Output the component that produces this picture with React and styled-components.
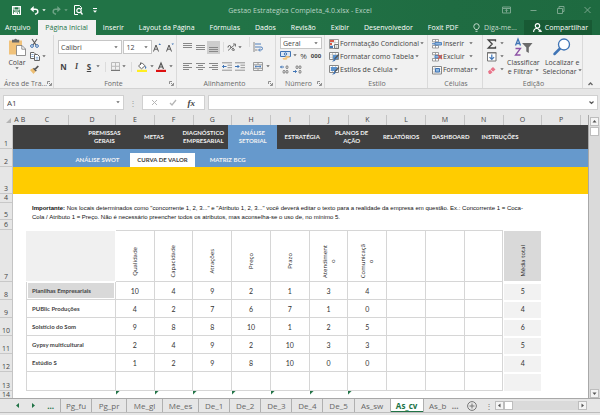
import React from "react";
import styled, { createGlobalStyle, css } from "styled-components";

const GREEN = "#217346";
const UI = '"Open Sans", "Noto Sans", sans-serif';
const CELL = 'Lato, "Open Sans", sans-serif';
const TEXT = '"Liberation Sans", Arial, sans-serif';

const ROWS = [24, 18, 27, 9, 17, 10, 52, 18, 18, 18, 18, 18, 19, 7];
const COLS = "28fr 24fr 172fr 188fr repeat(12, 155fr) 28fr";

const GlobalStyle = createGlobalStyle`
  * { box-sizing: border-box; }
  body { margin: 0; background: #e6e6e6; font-family: ${UI}; font-size: 7px; color: #444; }
  button, select, input { font: inherit; color: inherit; margin: 0; padding: 0; border: 0; background: none; }
`;

const Page = styled.div`
  display: flex;
  flex-direction: column;
  min-height: 100vh;
`;

/* ---------- title bar and ribbon tabs ---------- */
const Header = styled.header`
  background: linear-gradient(90deg, #217346 40%, #1f6c42 75%, #1e6a40);
  color: #fff;
`;
const TitleBar = styled.div`
  display: grid;
  grid-template-columns: 1fr auto 1fr;
  align-items: center;
  height: 20px;
`;
const QuickBar = styled.div`
  display: flex;
  align-items: center;
  padding-left: 12px;
`;
const IconButton = styled.button`
  display: flex;
  align-items: center;
  gap: ${(p) => p.$gap || 0}px;
  margin-right: ${(p) => p.$after || 0}px;
  opacity: ${(p) => (p.$dim ? 0.35 : 1)};
  line-height: 9px;
  white-space: nowrap;
`;
const Title = styled.h1`
  margin: 0;
  font-size: 7px;
  font-weight: 400;
  color: #b9d3c4;
`;
const WindowButtons = styled.div`
  display: flex;
  justify-content: flex-end;
  gap: 18px;
  padding-right: 8px;
  opacity: 0.4;
`;
const RibbonTabs = styled.nav`
  display: flex;
  height: 15px;
  padding-right: 8px;
`;
const RibbonTab = styled.button`
  padding: 0 8px 0 7px;
  color: ${(p) => (p.$active ? GREEN : "#fff")};
  background: ${(p) => (p.$active ? "#f1f1f1" : "none")};
  white-space: nowrap;
  &:first-child { padding-left: 5px; }
`;
const TellMe = styled.button`
  display: flex;
  align-items: center;
  gap: 4px;
  margin-left: auto;
  margin-right: 7px;
  color: #c4dacd;
  white-space: nowrap;
`;
const Share = styled.button`
  display: flex;
  align-items: center;
  gap: 3px;
  padding: 0 4px 0 9px;
  background: #185a34;
`;

/* ---------- ribbon ---------- */
const Ribbon = styled.section`
  display: grid;
  grid-template-columns: 54fr 123fr 99fr 49fr 103fr 55fr 100fr 17fr;
  height: 54px;
  background: #f1f1f1;
  border-bottom: 1px solid #d2d2d2;
`;
const Group = styled.div`
  display: flex;
  flex-direction: column;
  justify-content: space-between;
  padding: 2px 2px 0 4px;
  border-right: 1px solid #dadada;
  min-width: 0;
  &:last-child { border: 0; }
`;
const GroupBody = styled.div`
  display: flex;
  flex: 1;
  gap: ${(p) => p.$gap || 0}px;
  padding-left: ${(p) => p.$inset || 0}px;
`;
const GroupLabel = styled.div`
  display: flex;
  align-items: center;
  height: 10px;
  color: #6a6a6a;
  span { flex: 1; text-align: center; white-space: nowrap; }
`;
const Stack = styled.div`
  display: flex;
  flex-direction: column;
  justify-content: space-around;
  flex: ${(p) => (p.$grow ? 1 : "none")};
  padding-bottom: 2px;
`;
const Line = styled.div`
  display: flex;
  align-items: center;
  gap: ${(p) => p.$gap || 0}px;
  height: ${(p) => p.$h || 13}px;
`;
const BigButton = styled.button`
  display: flex;
  flex-direction: column;
  align-items: center;
  padding-top: 1px;
  line-height: 9px;
  white-space: nowrap;
  svg:first-child { margin-bottom: 2px; }
`;
const Glyph = styled.button`
  width: ${(p) => p.$w || 10}px;
  font-family: ${(p) => (p.$serif ? '"Liberation Serif", serif' : "inherit")};
  font-size: ${(p) => p.$size || 8}px;
  line-height: 10px;
  font-weight: ${(p) => (p.$bold ? 700 : 400)};
  font-style: ${(p) => (p.$italic ? "italic" : "normal")};
  text-decoration: ${(p) => (p.$underline ? "underline" : "none")};
  text-align: center;
`;
const Toggle = styled.button`
  display: flex;
  align-items: center;
  justify-content: center;
  width: 13px;
  height: 13px;
  background: ${(p) => (p.$on ? "#cdcdcd" : "none")};
`;
const Bar = styled.span`
  width: 1px;
  height: 10px;
  margin: 0 3px;
  background: #dcdcdc;
`;
const SelectBox = styled.label`
  display: flex;
  align-items: center;
  flex: ${(p) => p.$grow || 1};
  min-width: 0;
  height: ${(p) => p.$h || 14}px;
  padding: 0 3px 0 2px;
  background: #fff;
  border: 1px solid #c6c6c6;
  select { flex: 1; min-width: 0; appearance: none; outline: 0; }
`;

/* ---------- formula bar ---------- */
const FormulaRow = styled.div`
  display: flex;
  align-items: center;
  gap: 3px;
  padding: 6px 2px 5px 3px;
`;
const FormulaBox = styled.div`
  display: flex;
  align-items: center;
  flex: ${(p) => p.$flex};
  justify-content: ${(p) => p.$justify || "space-between"};
  height: 15px;
  padding: 0 3px;
  background: #fff;
  border: 1px solid #d0d0d0;
  font-size: 8px;
  input { flex: 1; min-width: 0; outline: 0; }
`;
const Dots = styled.span`
  width: 12px;
  text-align: center;
  color: #999;
  font-size: 8px;
  line-height: 10px;
`;

/* ---------- sheet ---------- */
const Workbook = styled.main`
  display: grid;
  grid-template-columns: 13px 1fr 12px;
  grid-template-rows: 10px auto;
`;
const Corner = styled.div`
  display: flex;
  justify-content: flex-end;
  align-items: flex-end;
  padding: 0 2px 2px 0;
`;
const ColumnHeads = styled.div`
  display: grid;
  grid-template-columns: ${COLS};
  font-size: 7px;
  line-height: 10px;
  text-align: center;
  span { border-right: 1px solid #c4c4c4; }
  span:nth-child(-n + 2) { border: 0; }
  span:last-child { border: 0; }
`;
const RowHeads = styled.div`
  display: grid;
  grid-template-rows: ${ROWS.map((h) => h + "px").join(" ")};
  font-size: 7px;
  border-right: 1px solid #c4c4c4;
`;
const RowHead = styled.span`
  display: flex;
  align-items: flex-end;
  justify-content: center;
  min-height: 0;
  padding-bottom: 2px;
  line-height: 7px;
  box-shadow: inset 0 -1px #c8c8c8;
  &:last-child { padding: 0; box-shadow: none; }
`;
const Sheet = styled.div`
  background: #fff;
  font-family: ${CELL};
`;
const MainNav = styled.nav`
  display: grid;
  grid-template-columns: repeat(9, 1fr);
  height: ${ROWS[0]}px;
  padding: 0 11% 0 11.6%;
  background: #404040;
`;
const NavLink = styled.a`
  display: flex;
  align-items: center;
  justify-content: center;
  text-align: center;
  color: #f2f2f2;
  background: ${(p) => (p.$active ? "#6699cc" : "none")};
  font-weight: 700;
  font-size: 6px;
  line-height: 8px;
  text-decoration: none;
`;
const SubNav = styled.nav`
  display: grid;
  grid-template-columns: repeat(3, 1fr);
  height: ${ROWS[1]}px;
  padding: 4px 57% 0 9%;
  background: #6699cc;
`;
const SubLink = styled(NavLink)`
  color: ${(p) => (p.$active ? "#404040" : "#f2f2f2")};
  background: ${(p) => (p.$active ? "#fff" : "none")};
`;
const Banner = styled.div`
  height: ${ROWS[2]}px;
  background: #ffcc00;
`;
const Note = styled.p`
  margin: 0;
  height: ${ROWS[3] + ROWS[4] + ROWS[5]}px;
  padding: 10px 56px 0 19px;
  font-family: ${TEXT};
  font-size: 6px;
  line-height: 9px;
  color: #111;
`;
const TableArea = styled.div`
  display: grid;
  grid-template-columns: ${COLS};
`;
const DataTable = styled.table`
  grid-column: 3 / 16;
  width: 100%;
  table-layout: fixed;
  border-spacing: 0;
  font-size: 7px;
  line-height: 8px;
  color: #333;
  col:first-child { width: 17.4%; }
`;
const line = css`1px solid #d6d6d6`;
const Cell = styled.td`
  height: ${(p) => p.$h}px;
  padding: 0;
  text-align: center;
  border-right: ${line};
  border-bottom: ${line};
`;
const NameCell = styled.th`
  height: ${(p) => p.$h}px;
  padding: 0 0 0 5px;
  text-align: left;
  font-size: 6px;
  font-weight: 700;
  color: #444;
  border: ${line};
  border-top: 0;
  background: ${(p) => (p.$own ? "#d9d9d9" : "none")};
  box-shadow: ${(p) => (p.$own ? "inset 0 0 0 1px #fff" : "none")};
`;
const TotalCell = styled.td`
  padding: 0;
  text-align: center;
  background: #f2f2f2;
  box-shadow: inset 0 1px 0 1px #fff;
`;
const HeadCell = styled.th`
  height: ${ROWS[6]}px;
  padding: 10px 0 0;
  border-top: ${line};
  border-right: ${line};
  border-bottom: ${line};
  font-size: 6px;
  font-weight: 400;
  color: #222;
  ${(p) => p.$kind === "blank" && css`background: #f0f0f0; border-color: #fff;`}
  ${(p) => p.$kind === "total" && css`background: #d9d9d9; border-color: #fff; border-left: 1px solid #fff;`}
`;
const Upright = styled.span`
  display: inline-block;
  writing-mode: vertical-rl;
  transform: rotate(180deg);
  font-family: ${UI};
  text-align: center;
  vertical-align: middle;
`;
const NoteCell = styled.td`
  height: ${ROWS[13]}px;
  padding: 0;
  background: ${(p) => (p.$mark ? `linear-gradient(135deg, ${GREEN} 2px, transparent 3px)` : "none")};
`;
const VScroll = styled.div`
  grid-column: 3;
  grid-row: 1 / 3;
  display: flex;
  flex-direction: column;
  align-items: center;
  gap: 1px;
  padding-top: 2px;
  background: linear-gradient(#e6e6e6, #e6e6e6) 0 0 / 100% 10px no-repeat, #dadada;
  border-left: 1px solid #a8a8a8;
`;
const ScrollPart = styled.button`
  display: flex;
  align-items: center;
  justify-content: center;
  width: 9px;
  height: 9px;
  background: ${(p) => (p.$plain ? "#fff" : "#f4f4f4")};
  border: 1px solid #bdbdbd;
  margin-top: ${(p) => (p.$end ? "auto" : 0)};
  margin-left: ${(p) => (p.$right ? "auto" : 0)};
`;

/* ---------- sheet tabs ---------- */
const SheetBar = styled.footer`
  display: flex;
  align-items: center;
  height: 15px;
  border-top: 1px solid #a8a8a8;
  border-bottom: 1px solid #bcbcbc;
  font-size: 8px;
`;
const Steps = styled.div`
  display: flex;
  align-items: center;
  justify-content: space-between;
  width: 60px;
  padding: 0 6px 0 15px;
  color: ${GREEN};
`;
const SheetTab = styled.button`
  height: 13px;
  flex: ${(p) => p.$w} 0 0;
  white-space: nowrap;
  color: ${(p) => (p.$active ? GREEN : "#666")};
  font-weight: ${(p) => (p.$active ? 700 : 400)};
  background: ${(p) => (p.$active ? "#fff" : "none")};
  border-left: 1px solid #b0b0b0;
  box-shadow: ${(p) => (p.$active ? `inset 0 -1px ${GREEN}` : "none")};
`;
const SheetTabs = styled.div`
  display: flex;
  flex: 391 0 0;
`;
const TabTail = styled.div`
  display: flex;
  align-items: center;
  gap: 8px;
  flex: 43 0 0;
  color: #777;
`;
const HScroll = styled.div`
  display: flex;
  flex: 92 0 0;
  height: 9px;
  margin-right: 13px;
  background: #dadada;
`;

/* ---------- icons ---------- */
const Svg = styled.svg`
  display: block;
  flex: none;
  overflow: visible;
`;
const I = ({ w = 10, h = 10, box, children, ...rest }) => (
  <Svg width={w} height={h} viewBox={box || `0 0 ${w} ${h}`} fill="none" stroke="#666" strokeWidth="1" aria-hidden="true" {...rest}>
    {children}
  </Svg>
);
const Caret = ({ c = "#666" }) => (
  <I w={4} h={3}><path d="M.3.300h3.400L2 2.200z" fill={c} stroke="none" /></I>
);
const Launcher = () => (
  <I w={5} h={5}><path d="M.5 3V.5H3M2 2l2 2M4.500 2v2.500H2" stroke="#777" strokeWidth=".8" /></I>
);
const Lines = ({ rows }) => (
  <I w={9} h={9}>{rows.map(([x, y, w], i) => <path key={i} d={`M${x} ${y}h${w}`} stroke="#888" />)}</I>
);
const Save = () => (
  <I w={9} h={9} stroke="#fff"><path d="M.6.6h7.800v7.800H.6z" strokeWidth="1.200" /><path d="M2 1v3h5V1" /><path d="M2.500 8.500V6h4v2.500" /><path d="M3 6.500h2v1.500H3z" fill="#fff" stroke="none" /></I>
);
const Undo = ({ flip }) => (
  <I w={9} h={9} stroke="#fff">
    <g transform={flip ? "translate(9 0) scale(-1 1)" : undefined}>
      <path d="M1.500 3.200h4a2.300 2.300 0 0 1 1 4.400l-1.500.6" strokeWidth="1.500" /><path d="M3.700 0L.2 3.200l3.500 3z" fill="#fff" stroke="none" />
    </g>
  </I>
);
const Preview = () => (
  <I w={9} h={10} stroke="#fff"><path d="M7.500 4V2.500l-2-2h-5v9H4" /><circle cx="5" cy="5.500" r="2.200" strokeWidth="1.200" /><path d="M6.500 7l2 2.500" strokeWidth="1.300" /></I>
);
const Paste = () => (
  <I w={18} h={18}>
    <path d="M1 2.500h13v14H1z" fill="#f0c27b" stroke="none" /><path d="M4 1.800h2.200a1.500 1.500 0 0 1 2.800 0h2.200V4.500H4z" fill="#696969" stroke="none" />
    <path d="M8.500 7.500h5.500l3.500 3.500v6.500h-9z" fill="#fff" stroke="#777" strokeWidth=".8" /><path d="M13.800 7.500v3.700h3.700" stroke="#777" strokeWidth=".8" />
  </I>
);
const Cut = () => (
  <I w={9} h={9}><path d="M2 0l4 6M7 0L3 6" stroke="#555" strokeWidth="1.100" /><circle cx="2" cy="7" r="1.400" stroke="#3f74b5" /><circle cx="7" cy="7" r="1.400" stroke="#3f74b5" /></I>
);
const Copy = () => (
  <I w={10} h={9}><path d="M.5.5h3.500l1.500 1.500v4.500h-5z" fill="#fff" /><path d="M4.500 2.500H7.500l2 2v4h-5z" fill="#fff" /><path d="M1.500 2.500h2M1.500 4.500h2M5.800 5.300h2.500M5.800 7h2.500" stroke="#4e83bd" strokeWidth=".7" /></I>
);
const Brush = () => (
  <I w={9} h={9}><path d="M0 5l3-2 3 3-2.500 3z" fill="#ecbd72" stroke="none" /><path d="M3.500 3.200l2.800 2.800" stroke="#555" strokeWidth="1.400" /><path d="M5.200 4.200L8.300 1" stroke="#555" strokeWidth="1.700" /></I>
);
const Borders = () => (
  <I w={9} h={9}><path d="M.5.5h8v7.500h-8zM4.500.5v8M.5 4.300h8" stroke="#bbb" /><path d="M0 8.500h9" stroke="#777" /></I>
);
const Fill = () => (
  <I w={10} h={10}><path d="M1.500 4L5 .8l3 3-3.500 3z" fill="#fff" stroke="#666" /><path d="M3.500 3V.5" /><path d="M8.500 3.500q1.500 2 .5 3t-1-1z" fill="#3f74b5" stroke="none" /><path d="M0 7.800h10V10H0z" fill="#ffee22" stroke="none" /></I>
);
const FontColor = () => (
  <I w={10} h={10}><path d="M2.500 7L5 1l2.500 6M3.400 5h3.200" stroke="#555" strokeWidth="1.200" /><path d="M0 7.800h10V10H0z" fill="#d11" stroke="none" /></I>
);
const Grow = ({ down }) => (
  <I w={8} h={9}><path d="M.5 8.500L3 2l2.500 6.500M1.400 6.200h3.200" stroke="#555" /><path d={down ? "M5.500.5h2.500L6.700 2z" : "M5.500 2h2.500L6.700.3z"} fill="#3f74b5" stroke="none" /></I>
);
const Orient = () => (
  <I w={10} h={9}><path d="M1 7.500L8 1.500M8.500 1v2.500M8.500 1H6" stroke="#777" /><path d="M1 4.500q0-2 1.500-2T4 5M5.500 7.500q-1-1.500 0-2t1.500.5-.5 2" stroke="#555" /></I>
);
const Wrap = () => (
  <I w={10} h={10}><path d="M1 0v10" stroke="#888" /><path d="M2 2h6M2 5h6q1.500 0 1.500 1.500T8 8H6M7 6.500L5.500 8 7 9.500" stroke="#3f74b5" strokeWidth=".9" /><path d="M2 8h2.500" stroke="#888" /></I>
);
const Merge = () => (
  <I w={10} h={9}><path d="M.5.5h9v8h-9zM.5 2.800h9M.5 6.300h9M5 .5v2M5 6.500v2" stroke="#888" strokeWidth=".8" /><path d="M2 4.500h6M3.300 3.500L2 4.500l1.300 1M6.700 3.500L8 4.500l-1.300 1" stroke="#3f74b5" strokeWidth=".8" /></I>
);
const Indent = ({ right }) => (
  <I w={10} h={9}><path d="M0 .8h10M5.500 3.200H10M5.500 5.700H10M0 8.200h10" stroke="#888" strokeWidth=".9" /><path d={right ? "M0 4.500h4M2.500 3L4 4.500 2.500 6" : "M4.500 4.500H.5M2 3L.5 4.500 2 6"} stroke="#3f74b5" /></I>
);
const Money = () => (
  <I w={11} h={9}><path d="M.5.5h10v5H.5z" fill="#dbe8f5" stroke="#3f74b5" /><circle cx="5.500" cy="3" r="1.200" stroke="#3f74b5" /><ellipse cx="7.500" cy="6" rx="2.500" ry="1" fill="#f2c478" stroke="none" /><ellipse cx="5" cy="7.800" rx="2.500" ry="1" fill="#f2c478" stroke="none" /></I>
);
const Decimal = ({ less }) => (
  <I w={9} h={9}>
    <path d={less ? "M0 6.500h3.500M2.200 5.200L3.500 6.500 2.200 7.800" : "M4 2H.5M1.800.7L.5 2l1.300 1.300"} stroke="#3f74b5" />
    <g stroke="#666" strokeWidth=".8"><ellipse cx="7" cy="2.200" rx="1" ry="1.500" /><ellipse cx="7" cy="6.800" rx="1" ry="1.500" />{less ? <ellipse cx="4" cy="2.200" rx="1" ry="1.500" /> : <ellipse cx="4" cy="6.800" rx="1" ry="1.500" />}</g>
  </I>
);
const CondFmt = () => (
  <I w={10} h={10}><path d="M.5.5h9v9h-9z" fill="#fff" stroke="#999" /><path d="M1 3.500h8M1 6.500h8M6 1v8" stroke="#bbb" strokeWidth=".6" /><path d="M1 1h4v2H1zM1 4h2v2H1z" fill="#d65a4a" stroke="none" /><path d="M1 7h3v2H1z" fill="#3f74b5" stroke="none" /><path d="M5.500 5.500h4v4h-4z" fill="#fff" stroke="#777" /><path d="M6.500 7h2M6.500 8.300h2" stroke="#777" strokeWidth=".6" /></I>
);
const TableFmt = ({ solid }) => (
  <I w={10} h={10}><path d="M.5.5h9v7h-9z" fill="#fff" stroke="#888" /><path d="M1 2.800h8M1 5.200h8M3.500 1v6M6.500 1v6" stroke="#aaa" strokeWidth=".6" /><path d={solid ? "M2 2h6v4H2z" : "M4 3h5v4H4z"} fill="#5b93cf" stroke="none" /><path d="M9.800 2.500L5.500 7" stroke="#555" strokeWidth="1.200" /><path d="M5.800 6l1 1.500Q6 10 3 9.500q2-1 2.800-3.500z" fill="#3f74b5" stroke="none" /></I>
);
const InsertCells = ({ del }) => (
  <I w={10} h={10}><path d="M.5.5h6v2.300h-6zM.5 6.500h6v2.500h-6zM3.500.5v2.300M3.500 6.500v2.500" fill="#fff" stroke="#888" strokeWidth=".8" /><path d="M3 3.500h6.500V6H3z" fill="#8fb8e0" stroke="#3f74b5" strokeWidth=".8" />{del ? <path d="M6 3l4 4M10 3L6 7" stroke="#d65a4a" strokeWidth="1.200" /> : <path d="M0 4.800h3" stroke="#3f74b5" />}</I>
);
const FormatCells = () => (
  <I w={10} h={10}><path d="M.5 1.500h9v7.500h-9z" fill="#fff" stroke="#888" /><path d="M3 .5v9M1 4h8M1 7h8" stroke="#aaa" strokeWidth=".6" /><path d="M3.500 3.500h4v3.500h-4z" fill="#8fb8e0" stroke="#3f74b5" /></I>
);
const Sigma = () => <I w={10} h={10}><path d="M8.500 2.500V1H1.200l4 4-4 4h7.300V7.500" stroke="#444" strokeWidth="1.300" /></I>;
const FillDown = () => <I w={10} h={10}><path d="M.5.5h8.500v8.500H.5z" fill="#fff" stroke="#777" /><path d="M0 1h9.500" stroke="#777" /><path d="M4.800 2.500v5M2.500 5.200l2.300 2.300 2.300-2.300" stroke="#3f74b5" strokeWidth="1.200" /></I>;
const Eraser = () => <I w={10} h={10}><path d="M1 6.500l5-4.500 2.500 2.500-5 4.500H2z" fill="#e8758a" stroke="none" /><path d="M3.200 4.500l2.800 2.600" stroke="#fff" strokeWidth=".8" /></I>;
const SortFilter = () => (
  <I w={19} h={18}>
    <path d="M1.500 7.500L4 1l2.500 6.500M2.400 5.500h3.200" stroke="#3f74b5" strokeWidth="1.300" /><path d="M1.500 10.500h5l-5 6.500h5" stroke="#8d52a5" strokeWidth="1.300" />
    <path d="M8 5h10.500L14.800 9.500v5.500l-2.500-1.500v-4z" fill="#6b6b6b" stroke="none" />
  </I>
);
const Find = () => (
  <I w={18} h={18}><path d="M7 10.500L1.500 16" stroke="#3f74b5" strokeWidth="2.500" strokeLinecap="round" /><circle cx="11" cy="6.500" r="5.500" fill="#fff" stroke="#3f74b5" strokeWidth="1.300" /></I>
);
const Bulb = () => <I w={7} h={9} stroke="#c4dacd"><path d="M2.500 6.500Q.8 4.800.8 3.400a2.700 2.700 0 0 1 5.400 0Q6.200 4.800 4.500 6.500zM2.500 8.300h2" /></I>;
const Person = () => <I w={9} h={9} stroke="#fff"><circle cx="4.500" cy="2.800" r="2.200" strokeWidth="1.200" /><path d="M.6 9q0-3.500 3.500-3.800L7.500 8M5.500 8.200h3.500M7.300 6.500V9" strokeWidth="1.100" /></I>;
const WinIcon = ({ d }) => <I w={9} h={8} stroke="#fff"><path d={d} /></I>;
const Tri = ({ d, c = "#555" }) => <I w={5} h={5}><path d={d} fill={c} stroke="none" /></I>;

/* ---------- data ---------- */
const tabs = ["Arquivo", "Página Inicial", "Inserir", "Layout da Página", "Fórmulas", "Dados", "Revisão", "Exibir", "Desenvolvedor", "Foxit PDF"];
const nav = ["PREMISSAS GERAIS", "METAS", "DIAGNÓSTICO EMPRESARIAL", "ANÁLISE SETORIAL", "ESTRATÉGIA", "PLANOS DE AÇÃO", "RELATÓRIOS", "DASHBOARD", "INSTRUÇÕES"];
const heads = [["Qualidade"], ["Capacidade"], ["Atrações"], ["Preço"], ["Prazo"], ["Atendiment", "o"], ["Comunicaçã", "o"], [], [], []];
const rows = [
  ["Planilhas Empresariais", [10, 4, 9, 2, 1, 3, 4], 5],
  ["PUBlic Produções", [4, 2, 7, 6, 7, 1, 0], 4],
  ["Solstício do Som", [9, 8, 8, 10, 1, 2, 5], 6],
  ["Gypsy multicultural", [2, 4, 9, 2, 10, 3, 3], 5],
  ["Estúdio S", [1, 2, 9, 8, 10, 0, 0], 4],
  ["", [], ""],
];
const sheets = [["Pg_fu", 31], ["Pg_pr", 35], ["Me_gl", 36], ["Me_es", 36], ["De_1", 31], ["De_2", 31], ["De_3", 31], ["De_4", 31], ["De_5", 31], ["As_sw", 36], ["As_cv", 33], ["As_b", 29]];
const ten = Array.from({ length: 10 }, (_, i) => i);

const Label = ({ children, launch }) => (
  <GroupLabel><span>{children}</span>{launch && <Launcher />}</GroupLabel>
);

export default function App() {
  return (
    <Page>
      <GlobalStyle />
      <Header>
        <TitleBar>
          <QuickBar>
            <IconButton aria-label="Salvar" $after={9}><Save /></IconButton>
            <IconButton aria-label="Desfazer" $gap={3} $after={6}><Undo /><Caret c="#fff" /></IconButton>
            <IconButton aria-label="Refazer" $gap={3} $after={6} $dim><Undo flip /><Caret c="#fff" /></IconButton>
            <IconButton aria-label="Visualizar impressão" $after={10}><Preview /></IconButton>
            <IconButton aria-label="Personalizar"><I w={4} h={5}><path d="M0 .5h4" stroke="#fff" /><path d="M0 2.500h4L2 4.800z" fill="#fff" stroke="none" /></I></IconButton>
          </QuickBar>
          <Title>Gestao Estrategica Completa_4.0.xlsx - Excel</Title>
          <WindowButtons>
            <IconButton aria-label="Opções da faixa"><WinIcon d="M.5 1h8v6h-8zM.5 2.500h8M4.500 6.500v-3M3 4.800l1.500-1.500L6 4.800" /></IconButton>
            <IconButton aria-label="Minimizar"><WinIcon d="M1.500 4.500h6" /></IconButton>
            <IconButton aria-label="Restaurar"><WinIcon d="M1.500 2.500h5v5h-5zM3 2.500v-2h5v5H6.500" /></IconButton>
            <IconButton aria-label="Fechar"><WinIcon d="M1.500 1l6 6M7.500 1l-6 6" /></IconButton>
          </WindowButtons>
        </TitleBar>
        <RibbonTabs>
          {tabs.map((t, i) => <RibbonTab key={t} $active={i === 1}>{t}</RibbonTab>)}
          <TellMe><Bulb />Diga-me...</TellMe>
          <Share><Person />Compartilhar</Share>
        </RibbonTabs>
      </Header>

      <Ribbon>
        <Group>
          <GroupBody $gap={4} $inset={4}>
            <BigButton><Paste />Colar<Caret /></BigButton>
            <Stack>
              <IconButton aria-label="Recortar"><Cut /></IconButton>
              <IconButton aria-label="Copiar" $gap={2}><Copy /><Caret /></IconButton>
              <IconButton aria-label="Pincel"><Brush /></IconButton>
            </Stack>
          </GroupBody>
          <Label launch>Área de Tra...</Label>
        </Group>
        <Group>
          <GroupBody>
            <Stack $grow>
              <Line $h={15} $gap={1}>
                <SelectBox $grow="64 0 0"><select aria-label="Fonte"><option>Calibri</option></select><Caret /></SelectBox>
                <SelectBox $grow="24 0 0"><select aria-label="Tamanho"><option>12</option></select><Caret /></SelectBox>
                <Line $gap={5}><IconButton aria-label="Aumentar"><Grow /></IconButton><IconButton aria-label="Diminuir"><Grow down /></IconButton></Line>
              </Line>
              <Line $h={13} $gap={2}>
                <Glyph $bold $w={11}>N</Glyph><Glyph $italic $bold $serif $w={11}>I</Glyph><Glyph $bold $underline>S</Glyph><Caret />
                <Bar /><Borders /><Caret /><Bar />
                <IconButton aria-label="Preenchimento" $gap={3}><Fill /><Caret /></IconButton>
                <IconButton aria-label="Cor da fonte" $gap={3}><FontColor /><Caret /></IconButton>
              </Line>
            </Stack>
          </GroupBody>
          <Label launch>Fonte</Label>
        </Group>
        <Group>
          <GroupBody>
            <Stack>
              <Line $h={15}>
                <Toggle aria-label="Superior"><Lines rows={[[0, 0.5, 9], [0, 2.5, 9], [0, 4.5, 9]]} /></Toggle>
                <Toggle aria-label="Meio"><Lines rows={[[0, 2.5, 9], [0, 4.5, 9], [0, 6.5, 9]]} /></Toggle>
                <Toggle aria-label="Inferior" $on><Lines rows={[[0, 4.5, 9], [0, 6.5, 9], [0, 8.5, 9]]} /></Toggle>
                <Bar /><IconButton aria-label="Orientação" $gap={1}><Orient /><Caret /></IconButton>
              </Line>
              <Line $h={13}>
                <Toggle aria-label="Esquerda"><Lines rows={[[0, 1.5, 9], [0, 3.5, 6], [0, 5.5, 9], [0, 7.5, 6]]} /></Toggle>
                <Toggle aria-label="Centro"><Lines rows={[[0, 1.5, 9], [2, 3.5, 5], [0, 5.5, 9], [2, 7.5, 5]]} /></Toggle>
                <Toggle aria-label="Direita"><Lines rows={[[0, 1.5, 9], [3, 3.5, 6], [0, 5.5, 9], [3, 7.5, 6]]} /></Toggle>
                <Toggle aria-label="Diminuir recuo"><Indent /></Toggle>
                <Toggle aria-label="Aumentar recuo"><Indent right /></Toggle>
              </Line>
            </Stack>
            <Bar />
            <Stack>
              <Line $h={15}><IconButton aria-label="Quebrar texto"><Wrap /></IconButton></Line>
              <Line $h={13}><IconButton aria-label="Mesclar" $gap={3}><Merge /><Caret /></IconButton></Line>
            </Stack>
          </GroupBody>
          <Label launch>Alinhamento</Label>
        </Group>
        <Group>
          <GroupBody>
            <Stack $grow>
              <SelectBox $h={12} $grow="none"><select aria-label="Formato de número"><option>Geral</option></select><Caret /></SelectBox>
              <Line $gap={2}><Money /><Caret /><Glyph $w={9}>%</Glyph><Glyph $w={12} $size={6} $bold>000</Glyph></Line>
              <Line $gap={4}><Decimal /><Decimal less /></Line>
            </Stack>
          </GroupBody>
          <Label launch>Número</Label>
        </Group>
        <Group>
          <GroupBody>
            <Stack>
              <IconButton $gap={1}><CondFmt />Formatação Condicional<Caret /></IconButton>
              <IconButton $gap={1}><TableFmt />Formatar como Tabela<Caret /></IconButton>
              <IconButton $gap={1}><TableFmt solid />Estilos de Célula<Caret /></IconButton>
            </Stack>
          </GroupBody>
          <Label>Estilo</Label>
        </Group>
        <Group>
          <GroupBody>
            <Stack>
              <IconButton $gap={1}><InsertCells />Inserir&nbsp;&nbsp;<Caret /></IconButton>
              <IconButton $gap={1}><InsertCells del />Excluir&nbsp;&nbsp;<Caret /></IconButton>
              <IconButton $gap={1}><FormatCells />Formatar<Caret /></IconButton>
            </Stack>
          </GroupBody>
          <Label>Células</Label>
        </Group>
        <Group>
          <GroupBody $gap={3}>
            <Stack>
              <IconButton aria-label="Soma" $gap={3}><Sigma /><Caret /></IconButton>
              <IconButton aria-label="Preencher" $gap={3}><FillDown /><Caret /></IconButton>
              <IconButton aria-label="Limpar" $gap={3}><Eraser /><Caret /></IconButton>
            </Stack>
            <BigButton><SortFilter /><span>Classificar</span><IconButton as="span" $gap={2}>e Filtrar<Caret /></IconButton></BigButton>
            <BigButton><Find /><span>Localizar e</span><IconButton as="span" $gap={1}>Selecionar<Caret /></IconButton></BigButton>
          </GroupBody>
          <Label>Edição</Label>
        </Group>
        <Group>
          <GroupBody />
          <GroupLabel><IconButton aria-label="Recolher"><I w={7} h={5}><path d="M1.500 4l2-2 2 2" strokeWidth="1.300" /></I></IconButton></GroupLabel>
        </Group>
      </Ribbon>

      <FormulaRow>
        <FormulaBox $flex="59 0 0"><input aria-label="Caixa de nome" defaultValue="A1" /><Caret /></FormulaBox>
        <Dots>⋮</Dots>
        <FormulaBox $flex="65 0 0" $justify="space-around">
          <IconButton aria-label="Cancelar"><I w={7} h={7}><path d="M1 1l5 5M6 1L1 6" stroke="#b5b5b5" /></I></IconButton>
          <IconButton aria-label="Inserir"><I w={8} h={7}><path d="M1 4l2 2 4-5" stroke="#b5b5b5" strokeWidth="1.300" /></I></IconButton>
          <Glyph $italic $bold $serif $w={9} $size={9}>fx</Glyph>
        </FormulaBox>
        <FormulaBox $flex="451 0 0"><input aria-label="Fórmula" /><I w={5} h={4}><path d="M.5.5l2 2 2-2" stroke="#555" strokeWidth="1.200" /></I></FormulaBox>
      </FormulaRow>

      <Workbook>
        <Corner><I w={5} h={5}><path d="M5 0v5H0z" fill="#b5b5b5" stroke="none" /></I></Corner>
        <ColumnHeads>
          {"ABCDEFGHIJKLMNOP".split("").map((c) => <span key={c}>{c}</span>)}
          <span />
        </ColumnHeads>
        <VScroll>
          <ScrollPart aria-label="Para cima"><Tri d="M.5 3.500h4L2.500 1z" /></ScrollPart>
          <ScrollPart aria-label="Posição" $plain />
          <ScrollPart aria-label="Para baixo" $end><Tri d="M.5 1.500h4L2.500 4z" /></ScrollPart>
        </VScroll>
        <RowHeads>{ROWS.map((_, i) => <RowHead key={i}>{i + 1}</RowHead>)}</RowHeads>
        <Sheet>
          <MainNav>{nav.map((n, i) => <NavLink key={n} href="#" $active={i === 3}>{n}</NavLink>)}</MainNav>
          <SubNav>
            <SubLink href="#">ANÁLISE SWOT</SubLink>
            <SubLink href="#" $active>CURVA DE VALOR</SubLink>
            <SubLink href="#">MATRIZ BCG</SubLink>
          </SubNav>
          <Banner />
          <Note>
            <b>Importante:</b> Nos locais determinados como "concorrente 1, 2, 3..." e "Atributo 1, 2, 3..." você deverá editar o texto para a realidade da empresa em questão. Ex.: Concorrente 1 = Coca-<wbr />Cola&nbsp;/&nbsp;Atributo 1 = Preço. Não é necessário preencher todos os atributos, mas aconselha-se o uso de, no mínimo 5.
          </Note>
          <TableArea>
            <DataTable>
              <colgroup><col /><col span="11" /></colgroup>
              <thead>
                <tr>
                  <HeadCell $kind="blank" />
                  {heads.map((h, i) => (
                    <HeadCell key={i}><Upright>{h.map((t, j) => <React.Fragment key={j}>{j > 0 && <br />}{t}</React.Fragment>)}</Upright></HeadCell>
                  ))}
                  <HeadCell $kind="total"><Upright>Média total</Upright></HeadCell>
                </tr>
              </thead>
              <tbody>
                {rows.map(([name, vals, total], r) => (
                  <tr key={r}>
                    <NameCell $h={ROWS[7 + r]} $own={r === 0} scope="row">{name}</NameCell>
                    {ten.map((i) => <Cell key={i} $h={ROWS[7 + r]}>{vals[i]}</Cell>)}
                    <TotalCell>{total}</TotalCell>
                  </tr>
                ))}
                <tr>
                  <NoteCell />
                  {ten.map((i) => <NoteCell key={i} $mark={i < 7} />)}
                  <NoteCell />
                </tr>
              </tbody>
            </DataTable>
          </TableArea>
        </Sheet>
      </Workbook>

      <SheetBar>
        <Steps>
          <Tri d="M4 0v5L1 2.500z" c={GREEN} />
          <Tri d="M1 0v5l3-2.500z" c={GREEN} />
          <b>...</b>
        </Steps>
        <SheetTabs>
          {sheets.map(([s, w]) => <SheetTab key={s} $w={w} $active={s === "As_cv"}>{s}</SheetTab>)}
        </SheetTabs>
        <TabTail>
          <b>...</b>
          <IconButton aria-label="Nova planilha"><I w={10} h={10}><circle cx="5" cy="5" r="4.400" stroke="#777" /><path d="M5 2.500v5M2.500 5h5" stroke="#777" /></I></IconButton>
          <span>⋮</span>
        </TabTail>
        <HScroll>
          <ScrollPart aria-label="Para a esquerda"><Tri d="M3.500.5v4L1 2.500z" /></ScrollPart>
          <ScrollPart aria-label="Posição horizontal" $plain />
          <ScrollPart aria-label="Para a direita" $right><Tri d="M1.500.5v4L4 2.500z" /></ScrollPart>
        </HScroll>
      </SheetBar>
    </Page>
  );
}
